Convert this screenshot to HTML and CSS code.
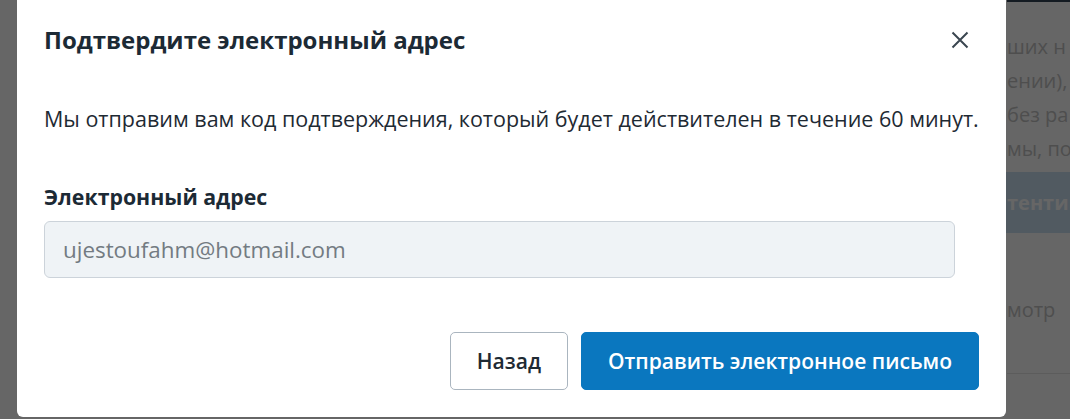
FILE: index.html
```html
<!DOCTYPE html>
<html lang="ru">
<head>
<meta charset="utf-8">
<title>Подтвердите электронный адрес</title>
<link rel="stylesheet" href="styles.css">
</head>
<body>
<div class="page">
  <div class="page-col">
    <div class="page-top"></div>
    <p class="page-text">ших н</p>
    <p class="page-text">ении),</p>
    <p class="page-text">без ра</p>
    <p class="page-text">мы, по</p>
    <div class="page-band">тенти</div>
    <p class="page-text page-link">мотр</p>
    <div class="page-rule"></div>
  </div>
</div>
<div class="backdrop"></div>
<div class="modal" role="dialog" aria-labelledby="modal-title">
  <div class="modal-header">
    <h2 class="modal-title" id="modal-title">Подтвердите электронный адрес</h2>
    <button class="close-btn" aria-label="Закрыть">
      <svg width="18" height="18" viewBox="0 0 18 18" aria-hidden="true">
        <path d="M1.5 1.5 L16.5 16.5 M16.5 1.5 L1.5 16.5" stroke="#3a4650" stroke-width="2" stroke-linecap="butt" fill="none"/>
      </svg>
    </button>
  </div>
  <p class="modal-text">Мы отправим вам код подтверждения, который будет действителен в течение 60 минут.</p>
  <label class="field-label" for="email">Электронный адрес</label>
  <input class="field-input" id="email" type="email" placeholder="ujestoufahm@hotmail.com" disabled>
  <div class="modal-actions">
    <button class="btn btn-secondary">Назад</button>
    <button class="btn btn-primary">Отправить электронное письмо</button>
  </div>
</div>
</body>
</html>
```
FILE: styles.css
```css
* { box-sizing: border-box; }
html, body { margin: 0; padding: 0; }
body {
  width: 1070px;
  height: 419px;
  overflow: hidden;
  background: #ffffff;
  font-family: "Open Sans", "Noto Sans", sans-serif;
  color: #1e2a33;
}
.page {
  height: 419px;
  display: flex;
  justify-content: flex-end;
}
.page-col {
  width: 63px;
  display: flex;
  flex-direction: column;
  white-space: nowrap;
}
.page-top {
  height: 2px;
  background: #334455;
  margin-bottom: 28px;
}
.page-text {
  margin: 0;
  font-size: 20px;
  line-height: 34px;
  color: #c4c4c4;
}
.page-band {
  margin-top: 6px;
  height: 61px;
  margin-left: -4px;
  padding-left: 4px;
  background: #cbe0f2;
  color: #ffffff;
  font-weight: 700;
  font-size: 20px;
  line-height: 61px;
}
.page-link {
  margin-top: 60px;
}
.page-rule {
  margin-top: 46px;
  height: 1px;
  background: #e6e6e6;
}
.backdrop {
  position: fixed;
  inset: 0;
  background: rgba(0, 0, 0, 0.6);
}
.modal {
  position: absolute;
  left: 17px;
  top: 0;
  width: 989px;
  height: 417px;
  background: #ffffff;
  border-radius: 0 0 6px 6px;
  padding: 24px 27px 27px;
  display: flex;
  flex-direction: column;
}
.modal-header {
  display: flex;
  align-items: center;
  justify-content: space-between;
  height: 32px;
}
.modal-title {
  margin: 0;
  font-size: 24px;
  line-height: 32px;
  font-weight: 700;
  color: #1c2a35;
}
.close-btn {
  width: 32px;
  height: 32px;
  margin-right: 3px;
  padding: 0;
  border: 0;
  background: transparent;
  display: flex;
  align-items: center;
  justify-content: center;
}
.modal-text {
  margin: 48px 0 0;
  font-size: 21.5px;
  line-height: 30px;
  color: #1e2a33;
  white-space: nowrap;
}
.field-label {
  margin-top: 48px;
  font-size: 21.3px;
  line-height: 30px;
  font-weight: 700;
  color: #1c2a35;
}
.field-input {
  margin-top: 9px;
  width: 911px;
  height: 57px;
  padding: 0 18px;
  border: 1px solid #ccd3da;
  border-radius: 6px;
  background: #eff3f6;
  font-family: inherit;
  font-size: 22.4px;
  color: #6d757c;
}
.field-input::placeholder { color: #737b82; opacity: 1; }
.modal-actions {
  margin-top: auto;
  display: flex;
  justify-content: flex-end;
  gap: 13px;
}
.btn {
  height: 58px;
  border-radius: 5px;
  font-family: inherit;
  font-size: 21.05px;
  font-weight: 600;
  padding: 0 26px;
}
.btn-secondary {
  background: #ffffff;
  border: 1px solid #aab5bf;
  color: #1e2a33;
}
.btn-primary {
  background: #0a77bf;
  border: 1px solid #0a77bf;
  color: #ffffff;
}
```
